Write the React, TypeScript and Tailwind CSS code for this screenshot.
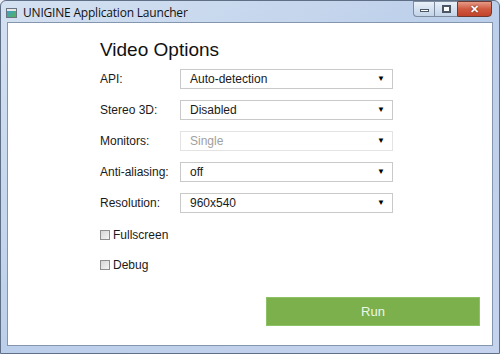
import { ReactNode } from 'react';

const rows = [
  { label: 'API:', value: 'Auto-detection' },
  { label: 'Stereo 3D:', value: 'Disabled' },
  { label: 'Monitors:', value: 'Single', disabled: true },
  { label: 'Anti-aliasing:', value: 'off' },
  { label: 'Resolution:', value: '960x540' },
];

function Select({ value, disabled }: { value: string; disabled?: boolean }) {
  return (
    <div
      className={`w-[213px] h-[20px] flex items-center justify-between pl-[9px] pr-[7px] bg-white border ${
        disabled ? 'border-[#e3e3e3] text-[#a0a0a0]' : 'border-[#c9c9c9] text-[#1a1a1a]'
      }`}
    >
      <span>{value}</span>
      <span className="text-[8px] text-black leading-none">▼</span>
    </div>
  );
}

function Check({ children }: { children: ReactNode }) {
  return (
    <div className="h-[20px] flex items-center gap-[3px]">
      <div className="w-[10px] h-[10px] border border-[#8e8e8e] bg-gradient-to-br from-[#d6d6d6] to-[#f4f4f4]" />
      <span>{children}</span>
    </div>
  );
}

function CaptionButtons() {
  return (
    <div className="flex h-[16px] self-start">
      <div className="w-[21px] h-full flex items-center justify-center border border-[#7d8ba0] border-r-0 rounded-bl-[4px] bg-gradient-to-b from-[#e9f0f8] to-[#c3d3e8]">
        <div className="w-[9px] h-[3px] border border-[#4a5566] bg-white mt-[3px]" />
      </div>
      <div className="w-[23px] h-full flex items-center justify-center border border-[#7d8ba0] border-r-0 bg-gradient-to-b from-[#e9f0f8] to-[#c3d3e8]">
        <div className="w-[9px] h-[8px] border-[2px] border-[#4a5566] bg-white" />
      </div>
      <div className="w-[35px] h-full flex items-center justify-center border border-[#6e3a30] rounded-br-[4px] bg-gradient-to-b from-[#e59a86] via-[#cf5a40] to-[#c2432a]">
        <span className="text-white font-bold text-[11px] leading-none [text-shadow:0_0_2px_#5a1a10]">✕</span>
      </div>
    </div>
  );
}

export default function App() {
  return (
    <div className="w-[500px] h-[354px] overflow-hidden bg-[#e8eef6]">
      <div className="w-[500px] h-[354px] flex flex-col rounded-t-[6px] border border-[#5f6f86] bg-gradient-to-br from-[#d4e1f1] via-[#bccfea] to-[#c6d3ee] font-['Liberation_Sans',Arial,sans-serif]">
        <div className="h-[21px] flex items-start justify-between pl-[5px] pr-[7px]">
          <div className="flex items-center gap-[6px] pt-[6px]">
            <div className="w-[11px] h-[10px] border border-[#6a7480] bg-gradient-to-br from-[#3a9ad6] to-[#5bb04a] flex items-start">
              <div className="w-full h-[2px] bg-[#e6e6e6]" />
            </div>
            <span className="font-['Open_Sans','Noto_Sans',sans-serif] text-[12px] leading-none text-[#111] tracking-[-0.2px]">
              UNIGINE Application Launcher
            </span>
          </div>
          <CaptionButtons />
        </div>
        <div className="flex-1 mx-[6px] mb-[7px] border border-[#8496ad] bg-white flex flex-col text-[12px] text-[#1a1a1a]">
          <div className="pl-[92px] pt-[16px]">
            <h1 className="text-[19px] leading-[22px] text-[#111] mb-[8px]">Video Options</h1>
            <div className="flex flex-col gap-[11px]">
              {rows.map((r) => (
                <div key={r.label} className="flex items-center">
                  <div className="w-[80px]">{r.label}</div>
                  <Select value={r.value} disabled={r.disabled} />
                </div>
              ))}
            </div>
            <div className="flex flex-col gap-[10px] mt-[12px]">
              <Check>Fullscreen</Check>
              <Check>Debug</Check>
            </div>
          </div>
          <div className="flex justify-end pr-[12px] mt-[22px]">
            <button className="w-[214px] h-[29px] bg-[#7bb04d] border border-[#8cc265] text-[#eef6e6] text-[13px]">
              Run
            </button>
          </div>
        </div>
      </div>
    </div>
  );
}
